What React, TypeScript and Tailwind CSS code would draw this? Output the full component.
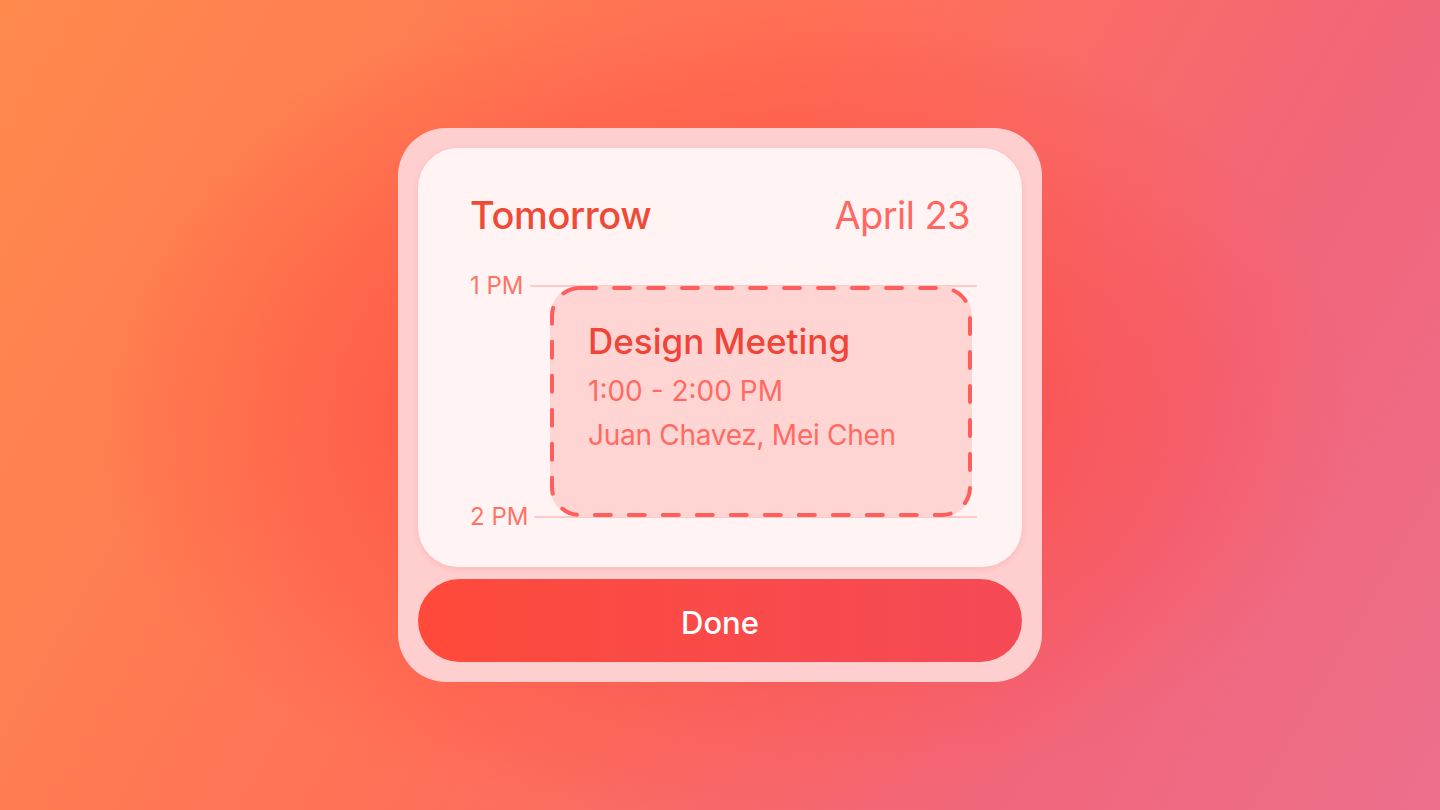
const font = { fontFamily: "Inter, 'Noto Sans', sans-serif" };

const HourRow = ({ label }: { label: string }) => (
    <div className="flex items-center gap-[6px] h-[28px]">
        <span className="text-[24px] leading-[28px] text-[#ff7466]">{label}</span>
        <div className="flex-1 h-[2px] rounded-full bg-[#ffc9c7]" />
    </div>
);

const EventCard = () => (
    <div className="absolute top-[14px] bottom-[14px] left-[80px] right-[5px] rounded-[30px] bg-[#ffd5d4] pl-[38px] pt-[33px]">
        {/* dashed outline */}
        <svg className="absolute inset-0 w-full h-full overflow-visible" preserveAspectRatio="none">
            <rect x="2" y="2" width="calc(100% - 4px)" height="calc(100% - 4px)" rx="28" ry="28" fill="none" stroke="#ff5f5c" strokeWidth="4" strokeDasharray="16 18" strokeLinecap="round" />
        </svg>
        <p className="relative text-[35px] leading-[44px] font-medium text-[#ef4437]">Design Meeting</p>
        <p className="relative mt-[6px] text-[28px] leading-[44px] text-[#ff6a62]">1:00 - 2:00 PM</p>
        <p className="relative text-[28px] leading-[44px] tracking-[-0.01em] text-[#ff6a62]">Juan Chavez, Mei Chen</p>
    </div>
);

export default function App() {
    return (
        <div
            className="w-full min-h-screen flex items-center justify-center [background-image:radial-gradient(ellipse_44%_52%_at_50%_50%,rgba(255,62,56,0.9)_0%,rgba(255,70,60,0.45)_55%,rgba(255,70,60,0)_100%),linear-gradient(120deg,#ff8a4c_0%,#ff7058_45%,#f2667a_75%,#ec6f8c_100%)]"
            style={font}
        >
            <div className="w-[644px] p-5 rounded-[48px] bg-[#ffcfcf] flex flex-col gap-3">
                {/* schedule card */}
                <div className="h-[419px] rounded-[40px] bg-[#fff4f3] shadow-[0_2px_6px_rgba(240,120,120,0.25)] pt-[43px] pl-[52px] pr-[45px]">
                    <div className="flex items-baseline justify-between pr-[7px]">
                        <h1 className="text-[38px] leading-[48px] font-medium tracking-[-0.01em] text-[#f04a36]">Tomorrow</h1>
                        <p className="text-[38px] leading-[48px] tracking-[-0.015em] text-[#ff6862]">April 23</p>
                    </div>
                    <div className="relative mt-[33px] h-[259px] flex flex-col justify-between">
                        <HourRow label="1 PM" />
                        <HourRow label="2 PM" />
                        <EventCard />
                    </div>
                </div>
                <button className="h-[83px] pt-[5px] rounded-full bg-gradient-to-r from-[#ff4a3a] to-[#f54a56] text-white text-[31px] font-medium">
                    Done
                </button>
            </div>
        </div>
    );
}
